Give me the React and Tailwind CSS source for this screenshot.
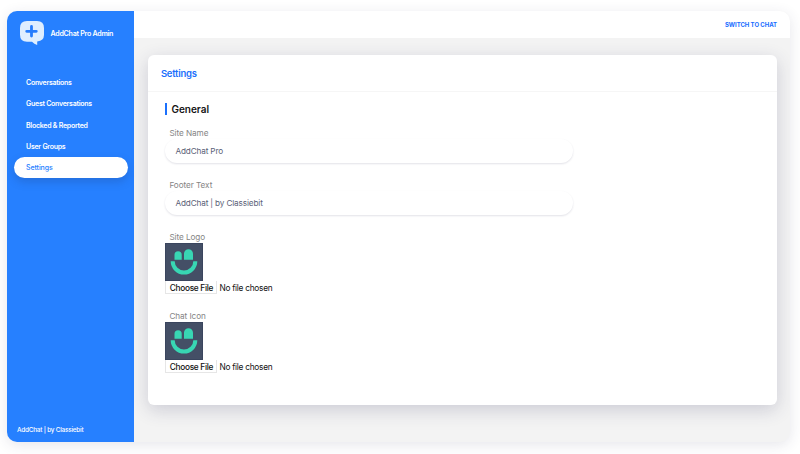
const navItems = ['Conversations', 'Guest Conversations', 'Blocked & Reported', 'User Groups', 'Settings'];

function ChatLogo() {
  return (
    <svg className="h-6 w-6 shrink-0" viewBox="0 0 24 24">
      <path d="M7 0h10q7 0 7 7v7q0 5.6-6.8 6.6V24q-3-1-5.2-3.2H7q-7 0-7-7V7q0-7 7-7z" fill="#dfeeff" />
      <path d="M11.5 5.5v9.6M6.7 10.3h9.6" stroke="#267cfd" strokeWidth="2.8" strokeLinecap="round" />
    </svg>
  );
}

function Smiley() {
  return (
    <svg className="block h-[38px] w-[38px]" viewBox="0 0 38 38">
      <rect width="38" height="38" fill="#444f66" />
      <rect x=".5" y=".5" width="37" height="37" fill="none" stroke="#3a455e" />
      <path d="M9.5 16.7v-4.9a3.6 3.6 0 0 1 7.2 0v4.9zM19 16.7v-5.9a4.5 4.5 0 0 1 9 0v5.9z" fill="#38d6b3" />
      <path d="M7.7 18.3a11.3 11.3 0 0 0 22.6 0" fill="none" stroke="#38d6b3" strokeWidth="4" />
    </svg>
  );
}

function TextField({ label, value }) {
  return (
    <div className="h-[52px]">
      <div className="h-3 pl-1 text-[8.2px] leading-3 tracking-[-0.07px] text-[#858585]">{label}</div>
      <div className="flex h-6 w-[408px] items-center rounded-full bg-white pl-[10px] pt-[1.5px] text-[8.2px] tracking-[-0.14px] text-[#5b5f78] shadow-[0_1px_2px_rgba(50,50,93,0.14)]">
        {value}
      </div>
    </div>
  );
}

function FileField({ label }) {
  return (
    <div className="h-[79.5px]">
      <div className="h-3 pl-1 text-[8.2px] leading-3 tracking-[-0.07px] text-[#858585]">{label}</div>
      <Smiley />
      <div className="flex h-[13px] items-center text-[8.3px] tracking-[-0.25px] text-[#111]">
        <button className="h-[13px] w-[52px] border border-t-0 border-[#e6e6e6] bg-white pt-px text-center font-medium leading-3 tracking-[-0.3px]">Choose File</button>
        <span className="ml-[2px] pt-px leading-3">No file chosen</span>
      </div>
    </div>
  );
}

export default function App() {
  return (
    <div className="h-[454px] w-[800px] overflow-hidden bg-white pl-[7px] pt-[10.5px] font-['Inter',sans-serif] whitespace-nowrap">
      <div className="flex h-[431.5px] w-[783px] overflow-hidden rounded-[10px] bg-[#f3f3f3] shadow-[0_3px_14px_rgba(50,50,93,0.12)]">
        <aside className="flex w-[127.4px] shrink-0 flex-col bg-[#2680ff] text-white">
          <div className="flex h-[61.5px] items-start gap-[6.5px] pl-[13px] pt-[10.5px]">
            <ChatLogo />
            <span className="pt-[7.5px] text-[7.1px] leading-[10px] font-semibold tracking-[-0.27px]">AddChat Pro Admin</span>
          </div>
          <nav className="flex flex-col px-[6.5px]">
            {navItems.map((item) => (
              <a
                key={item}
                className={
                  item === 'Settings'
                    ? 'flex h-[21.3px] items-center rounded-full bg-white pl-[12.5px] text-[7px] font-medium tracking-[-0.07px] text-[#2680ff] shadow-[0_4px_9px_rgba(30,60,120,0.25)]'
                    : 'flex h-[21.3px] items-center pl-[12.5px] pt-[1.4px] text-[7px] font-semibold tracking-[-0.26px]'
                }
              >
                {item}
              </a>
            ))}
          </nav>
          <div className="mt-auto pb-[7.5px] pl-[10px] text-[6.4px] leading-[10px] font-medium tracking-[-0.22px]">AddChat | by Classiebit</div>
        </aside>
        <main className="flex grow flex-col">
          <header className="flex h-[27.5px] items-center justify-end bg-white pr-[13px] text-[6px] font-bold tracking-[-0.05px] text-[#176cff]">
            SWITCH TO CHAT
          </header>
          <section className="ml-[13.5px] mt-[17px] h-[350px] w-[629px] rounded-[6px] bg-white shadow-[0_5px_18px_rgba(50,50,93,0.2)]">
            <h1 className="flex h-[37px] items-center border-b border-[#f6f6f6] pl-[13px] pt-[1.5px] text-[9.5px] font-semibold tracking-[-0.22px] text-[#1b70fc]">Settings</h1>
            <div className="pl-[17.5px] pt-[11px]">
              <h2 className="flex h-3 items-center border-l-2 border-[#1b70fc] pl-1 text-[10px] font-semibold text-[#151515]">General</h2>
              <div className="pt-[11.5px]">
                <TextField label="Site Name" value="AddChat Pro" />
                <TextField label="Footer Text" value="AddChat | by Classiebit" />
                <FileField label="Site Logo" />
                <FileField label="Chat Icon" />
              </div>
            </div>
          </section>
        </main>
      </div>
    </div>
  );
}
